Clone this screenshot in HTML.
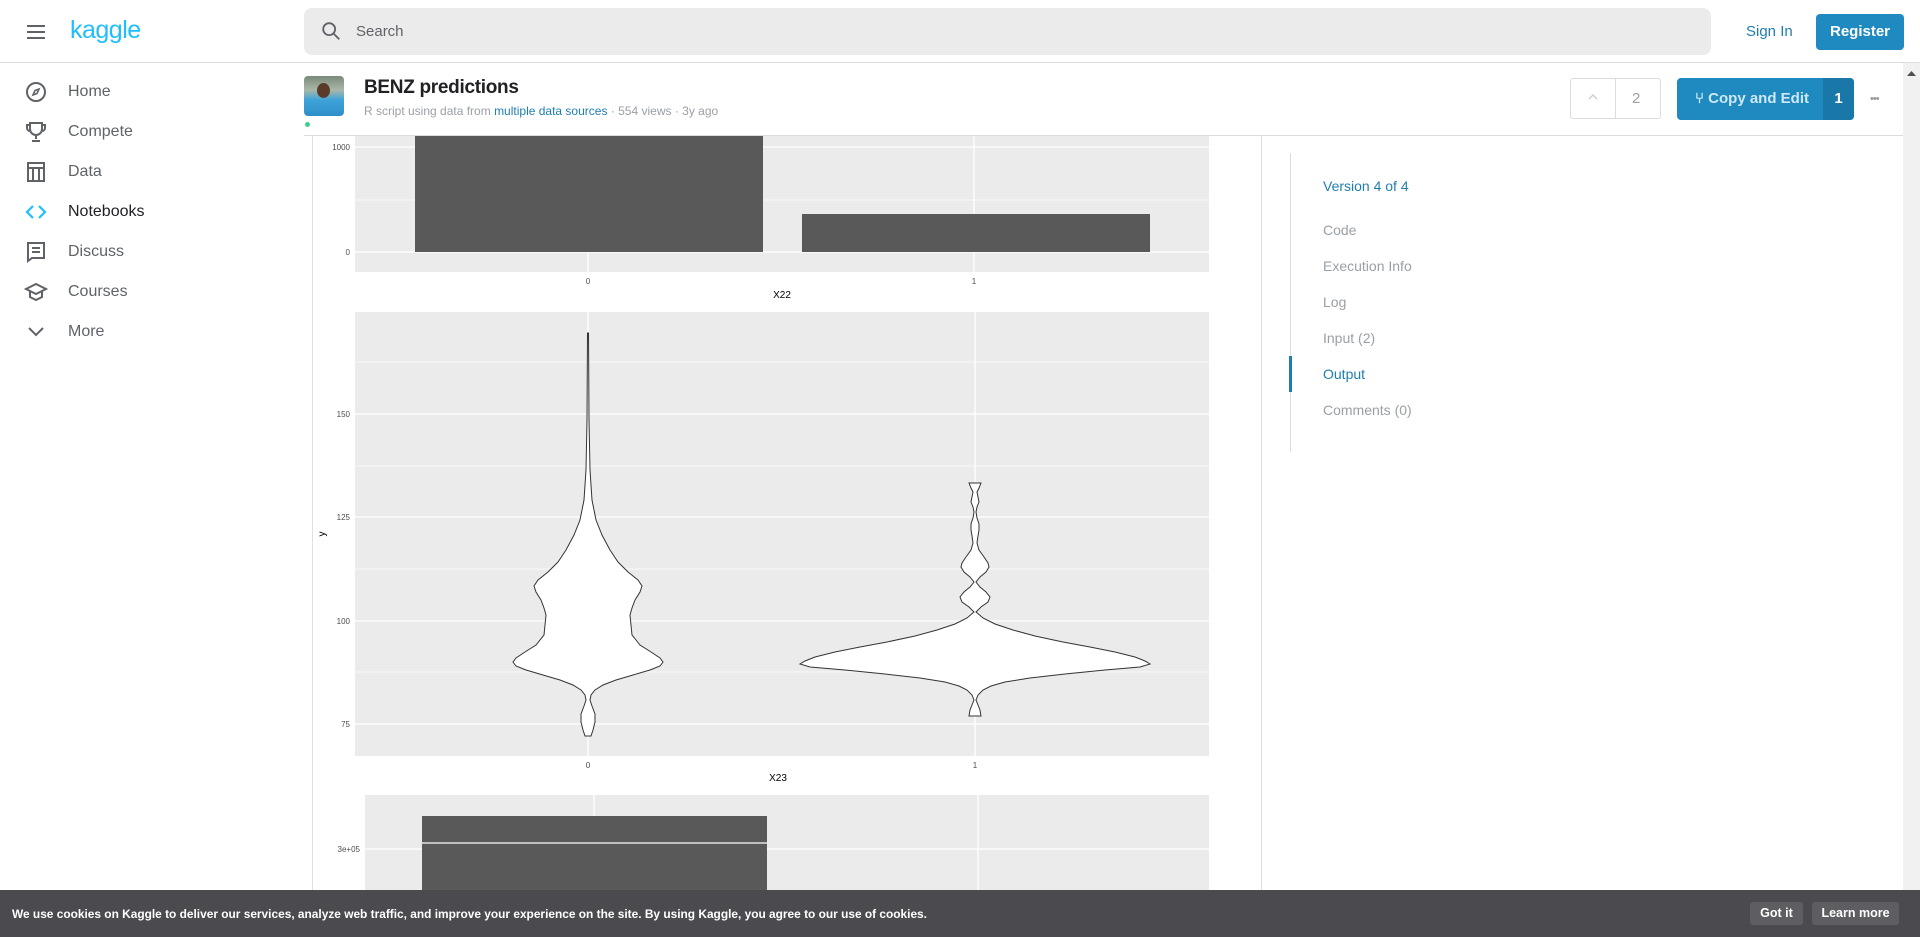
<!DOCTYPE html>
<html><head><meta charset="utf-8">
<style>
*{box-sizing:border-box;margin:0;padding:0}
body{width:1920px;height:937px;overflow:hidden;background:#fff;font-family:"Liberation Sans",Arial,sans-serif;position:relative;color:#202124}
.abs{position:absolute}
.nav{position:absolute;left:0;width:300px;height:40px;display:flex;align-items:center}
.nav svg{position:absolute;left:24px;width:24px;height:24px}
.nav span{position:absolute;left:68px;font-size:16px;color:#5f6368}
.side a{display:block;position:absolute;left:1323px;font-size:14px;color:#9aa0a6}
</style></head><body>

<svg class="abs" style="left:0;top:0" width="1920" height="937" viewBox="0 0 1920 937">
 <rect x="355" y="60" width="854" height="212" fill="#ebebeb"/>
 <g stroke="#fff"><line x1="355" x2="1209" y1="200" y2="200" stroke-width="0.7"/>
 <line x1="355" x2="1209" y1="147" y2="147" stroke-width="1.3"/><line x1="355" x2="1209" y1="252" y2="252" stroke-width="1.3"/>
 <line x1="588" x2="588" y1="60" y2="272" stroke-width="1.3"/><line x1="974" x2="974" y1="60" y2="272" stroke-width="1.3"/></g>
 <rect x="415" y="60" width="348" height="192" fill="#595959"/>
 <rect x="802" y="214" width="348" height="38" fill="#595959"/>
 <g font-size="8" fill="#4d4d4d" font-family="Liberation Sans,sans-serif">
 <text x="350" y="150" text-anchor="end">1000</text><text x="350" y="255" text-anchor="end">0</text>
 <text x="588" y="284" text-anchor="middle">0</text><text x="974" y="284" text-anchor="middle">1</text></g>
 <text x="782" y="298" font-size="10" text-anchor="middle" fill="#000" font-family="Liberation Sans,sans-serif">X22</text>
 <rect x="355" y="312" width="854" height="444" fill="#ebebeb"/>
 <g stroke="#fff" stroke-width="0.7"><line x1="355" x2="1209" y1="362" y2="362"/><line x1="355" x2="1209" y1="466" y2="466"/><line x1="355" x2="1209" y1="569" y2="569"/><line x1="355" x2="1209" y1="672" y2="672"/></g>
 <g stroke="#fff" stroke-width="1.3"><line x1="355" x2="1209" y1="414" y2="414"/><line x1="355" x2="1209" y1="517" y2="517"/><line x1="355" x2="1209" y1="621" y2="621"/><line x1="355" x2="1209" y1="724" y2="724"/>
 <line x1="588" x2="588" y1="312" y2="756"/><line x1="975" x2="975" y1="312" y2="756"/></g>
 <path id="v0" fill="#fff" stroke="#333" stroke-width="1"/>
 <path id="v1" fill="#fff" stroke="#333" stroke-width="1"/>
 <g font-size="8" fill="#4d4d4d" font-family="Liberation Sans,sans-serif">
 <text x="350" y="417" text-anchor="end">150</text><text x="350" y="520" text-anchor="end">125</text><text x="350" y="624" text-anchor="end">100</text><text x="350" y="727" text-anchor="end">75</text>
 <text x="588" y="768" text-anchor="middle">0</text><text x="975" y="768" text-anchor="middle">1</text></g>
 <text x="325" y="534" font-size="10" fill="#000" transform="rotate(-90 325 534)" text-anchor="middle" font-family="Liberation Sans,sans-serif">y</text>
 <text x="778" y="781" font-size="10" text-anchor="middle" fill="#000" font-family="Liberation Sans,sans-serif">X23</text>
 <rect x="365" y="795" width="844" height="142" fill="#ebebeb"/>
 <g stroke="#fff" stroke-width="1.3"><line x1="594" x2="594" y1="795" y2="937"/><line x1="978" x2="978" y1="795" y2="937"/><line x1="365" x2="1209" y1="849" y2="849"/></g>
 <rect x="422" y="816" width="345" height="121" fill="#595959"/>
 <line x1="422" x2="767" y1="843" y2="843" stroke="#fff" stroke-width="1.3"/>
 <text x="360" y="852" font-size="8" fill="#4d4d4d" text-anchor="end" font-family="Liberation Sans,sans-serif">3e+05</text>
 <line x1="312.5" x2="312.5" y1="136" y2="937" stroke="#e0e0e0"/>
 <line x1="1261.5" x2="1261.5" y1="136" y2="937" stroke="#e0e0e0"/>
 <line x1="1290.5" x2="1290.5" y1="153" y2="452" stroke="#dadce0"/>
 <rect x="1289" y="356" width="3" height="36" fill="#1f7eb0"/>
</svg>
<script>
function vp(cx,d){var L=[],R=[];d.forEach(function(p){L.push((cx-p[1]).toFixed(1)+","+p[0]);R.unshift((cx+p[1]).toFixed(1)+","+p[0]);});return "M"+L.join(" L")+" L"+R.join(" L")+"Z";}
var d0=[[333,0.5],[420,1],[470,2],[500,4],[520,8],[535,14],[550,22],[562,30],[572,40],[580,50],[586,54],[592,52],[600,47],[608,44],[615,42],[625,43],[635,44],[645,52],[652,63],[658,72],[662,75],[666,72],[670,62],[675,45],[680,28],[685,15],[690,7],[695,3],[700,2],[706,4],[714,7],[722,7],[730,5],[736,3]];
var d1=[[483,6],[488,4],[492,2],[497,3],[502,4],[507,2],[512,1],[518,2],[524,4],[530,4],[536,3],[543,2],[550,4],[557,9],[563,13],[567,14],[572,11],[577,5],[582,1],[587,5],[592,11],[597,15],[602,13],[607,6],[612,1],[618,8],[624,20],[630,38],[636,60],[642,88],[647,115],[652,140],[657,160],[661,170],[664,175],[667,165],[670,130],[674,90],[678,55],[682,30],[686,16],[690,8],[695,3],[700,1],[705,3],[710,5],[716,6]];
document.getElementById("v0").setAttribute("d",vp(588,d0));
document.getElementById("v1").setAttribute("d",vp(975,d1));
</script>

<div class="abs" style="left:0;top:63px;width:312px;height:874px;background:#fff"></div>
<div class="abs" style="left:0;top:0;width:1920px;height:63px;background:#fff;border-bottom:1px solid #dadce0"></div>
<svg class="abs" style="left:24px;top:20px" width="24" height="24" viewBox="0 0 24 24"><path d="M3 6h18M3 12h18M3 18h18" stroke="#5f6368" stroke-width="2"/></svg>
<div class="abs" style="left:70px;top:16px;font-size:25px;color:#20beff;letter-spacing:-0.5px">kaggle</div>
<div class="abs" style="left:304px;top:8px;width:1407px;height:47px;background:#ebebeb;border-radius:8px"></div>
<svg class="abs" style="left:320px;top:20px" width="22" height="22" viewBox="0 0 24 24"><circle cx="10" cy="10" r="6.5" stroke="#5f6368" stroke-width="2" fill="none"/><path d="M15 15l6 6" stroke="#5f6368" stroke-width="2"/></svg>
<div class="abs" style="left:356px;top:23px;font-size:15px;color:#5f6368">Search</div>
<div class="abs" style="left:1746px;top:23px;font-size:15px;color:#1f7eb0">Sign In</div>
<div class="abs" style="left:1816px;top:14px;width:88px;height:36px;background:#1f8ac0;border-radius:4px;color:#fff;font-size:15px;font-weight:bold;text-align:center;line-height:36px">Register</div>

<div class="nav" style="top:72px"><svg viewBox="0 0 24 24"><circle cx="12" cy="12" r="9" stroke="#5f6368" stroke-width="2" fill="none"/><path d="M15 9l-2 4.5-4 1.5 2-4.5z" stroke="#5f6368" stroke-width="1.6" fill="none"/></svg><span>Home</span></div>
<div class="nav" style="top:112px"><svg viewBox="0 0 24 24"><path d="M6 3h12v6a6 6 0 0 1-12 0zM6 5H3v3a3 3 0 0 0 3 3M18 5h3v3a3 3 0 0 1-3 3M12 15v4M8 21h8" stroke="#5f6368" stroke-width="2" fill="none"/></svg><span>Compete</span></div>
<div class="nav" style="top:152px"><svg viewBox="0 0 24 24"><path d="M4 3h16v18H4zM4 8h16M9 8v13M15 8v13" stroke="#5f6368" stroke-width="2" fill="none"/></svg><span>Data</span></div>
<div class="nav" style="top:192px"><svg viewBox="0 0 24 24"><path d="M9 6l-6 6 6 6M15 6l6 6-6 6" stroke="#20beff" stroke-width="2.2" fill="none"/></svg><span style="color:#202124">Notebooks</span></div>
<div class="nav" style="top:232px"><svg viewBox="0 0 24 24"><path d="M4 3h16v15H8l-4 3zM8 8h8M8 12h8" stroke="#5f6368" stroke-width="2" fill="none"/></svg><span>Discuss</span></div>
<div class="nav" style="top:272px"><svg viewBox="0 0 24 24"><path d="M2 9l10-5 10 5-10 5zM6 11v6l6 3 6-3v-6" stroke="#5f6368" stroke-width="2" fill="none"/></svg><span>Courses</span></div>
<div class="nav" style="top:312px"><svg viewBox="0 0 24 24"><path d="M5 8l7 7 7-7" stroke="#5f6368" stroke-width="2" fill="none"/></svg><span>More</span></div>

<div class="abs" style="left:304px;top:63px;width:1599px;height:73px;background:#fff;border-bottom:1px solid #dadce0"></div>
<div class="abs" style="left:304px;top:76px;width:40px;height:40px;border-radius:4px;background:linear-gradient(180deg,#7a8a7a 0%,#a9b7a8 35%,#3da3d8 60%,#2f8fc9 100%);overflow:hidden"><div style="position:absolute;left:13px;top:7px;width:13px;height:15px;border-radius:50%;background:#5a3b2a"></div></div>
<div class="abs" style="left:305px;top:122px;width:5px;height:5px;border-radius:50%;background:#3ccf8e"></div>
<div class="abs" style="left:364px;top:77px;font-size:19px;font-weight:bold;color:#202124;letter-spacing:-0.3px">BENZ predictions</div>
<div class="abs" style="left:364px;top:104px;font-size:12px;color:#9aa0a6">R script using data from <span style="color:#1f7eb0">multiple data sources</span> · 554 views · 3y ago</div>
<div class="abs" style="left:1570px;top:78px;width:91px;height:41px;border:1px solid #dadce0;border-radius:3px"></div>
<div class="abs" style="left:1615px;top:78px;width:1px;height:41px;background:#dadce0"></div>
<svg class="abs" style="left:1586px;top:92px" width="14" height="10" viewBox="0 0 14 10"><path d="M3 7l4-4 4 4" stroke="#ccc" stroke-width="1.3" fill="none"/></svg>
<div class="abs" style="left:1632px;top:90px;font-size:15px;color:#9aa0a6">2</div>
<div class="abs" style="left:1677px;top:78px;width:177px;height:42px;background:#1f8ac0;border-radius:4px"></div>
<div class="abs" style="left:1823px;top:78px;width:31px;height:42px;background:#1a78a8;border-radius:0 4px 4px 0;color:#fff;font-size:15px;font-weight:bold;text-align:center;line-height:42px">1</div>
<div class="abs" style="left:1695px;top:90px;font-size:15px;color:#cfe8f5;font-weight:bold">⑂ Copy and Edit</div>
<div class="abs" style="left:1870px;top:93px;font-size:11px;color:#999;letter-spacing:-1px">•••</div>

<div class="side">
<a style="top:178px;color:#1f7eb0">Version 4 of 4</a>
<a style="top:222px">Code</a>
<a style="top:258px">Execution Info</a>
<a style="top:294px">Log</a>
<a style="top:330px">Input (2)</a>
<a style="top:366px;color:#1f7eb0">Output</a>
<a style="top:402px">Comments (0)</a>
</div>

<div class="abs" style="left:1903px;top:63px;width:17px;height:874px;background:#f1f1f1"></div>
<svg class="abs" style="left:1907px;top:70px" width="9" height="6"><path d="M0 6L4.5 1 9 6z" fill="#505050"/></svg>

<div class="abs" style="left:0;top:890px;width:1920px;height:47px;background:#4b4b4f"></div>
<div class="abs" style="left:12px;top:907px;font-size:11.9px;color:#fff;font-weight:bold">We use cookies on Kaggle to deliver our services, analyze web traffic, and improve your experience on the site. By using Kaggle, you agree to our use of cookies.</div>
<div class="abs" style="left:1750px;top:902px;width:53px;height:23px;background:#5d5d62;border-radius:3px;color:#fff;font-size:12.5px;font-weight:bold;text-align:center;line-height:23px">Got it</div>
<div class="abs" style="left:1812px;top:902px;width:87px;height:23px;background:#5d5d62;border-radius:3px;color:#fff;font-size:12.5px;font-weight:bold;text-align:center;line-height:23px">Learn more</div>
</body></html>
